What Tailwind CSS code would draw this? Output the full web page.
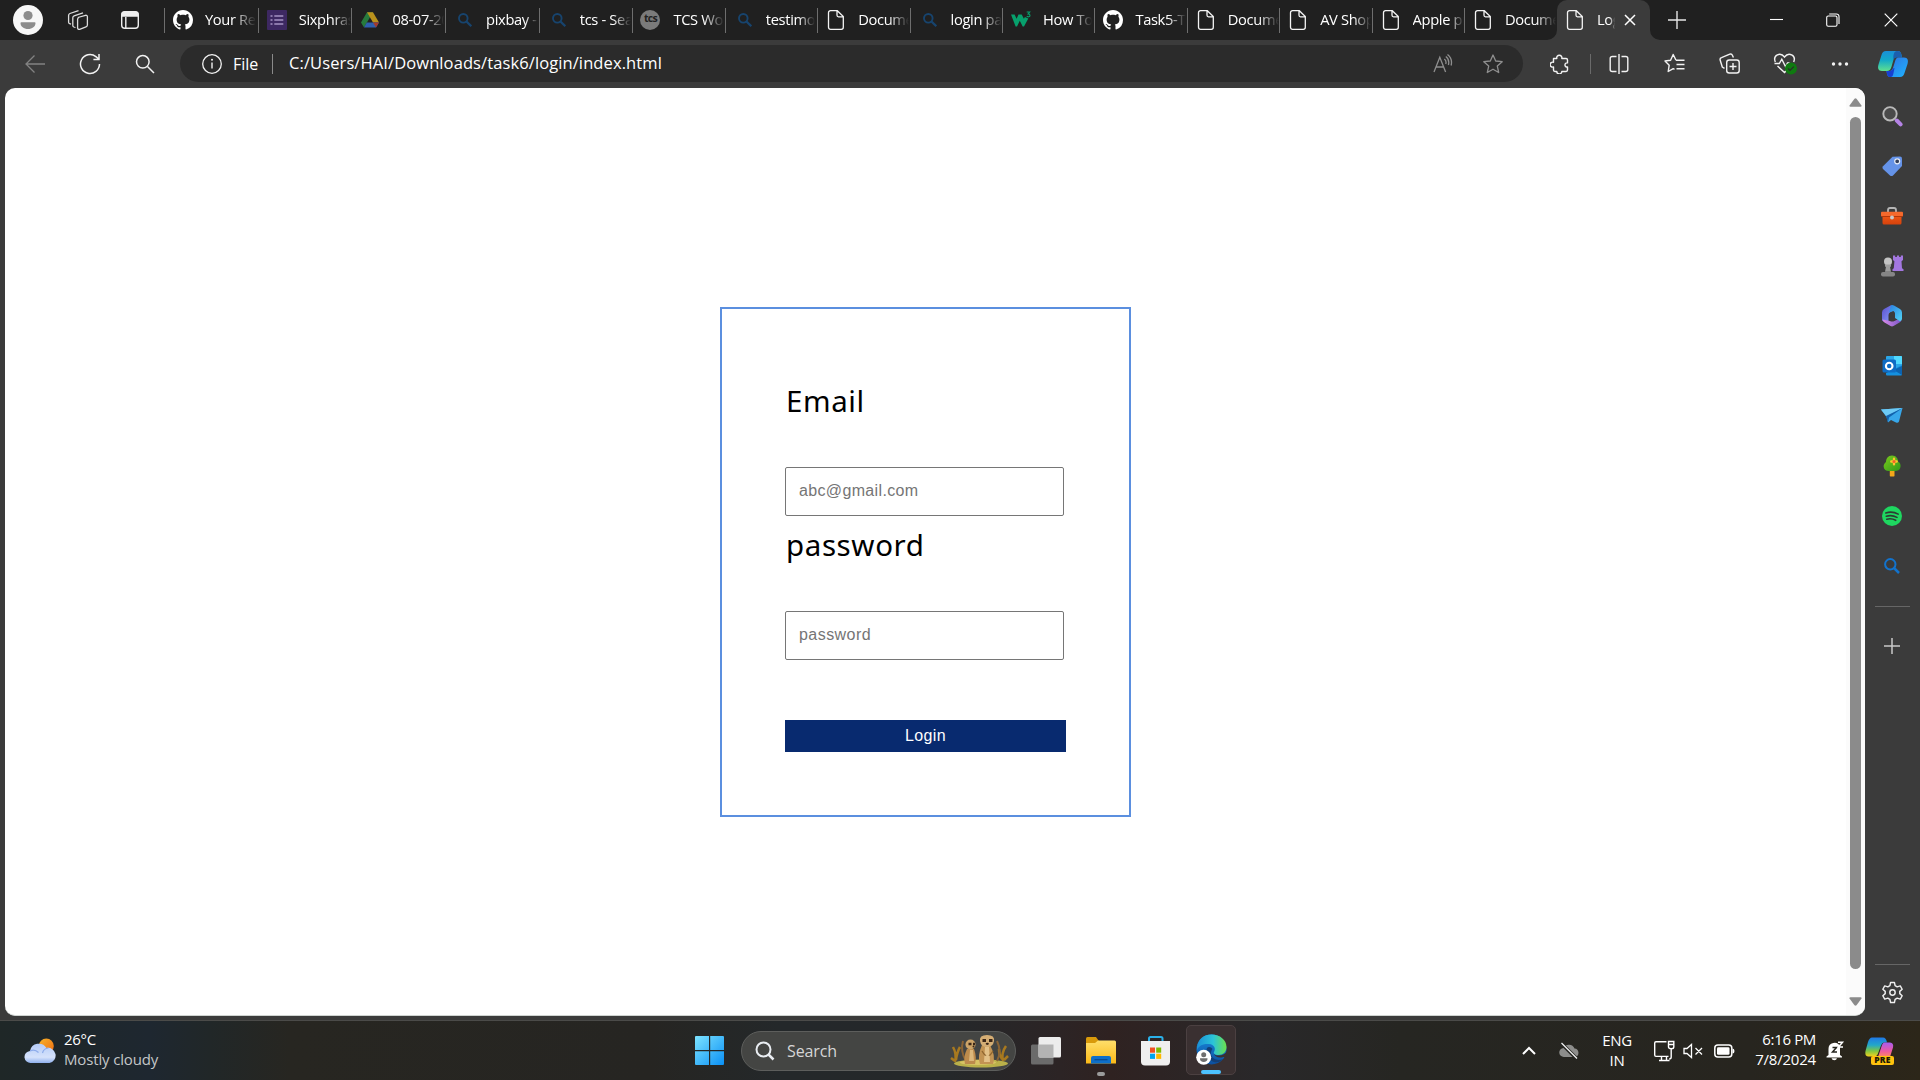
<!DOCTYPE html>
<html lang="en">
<head>
<meta charset="utf-8">
<title>Login</title>
<script src="https://cdn.jsdelivr.net/npm/@tailwindcss/browser@4"></script>
</head>
<body class="h-[1080px] w-[1920px] overflow-hidden bg-[#3b3b3b] font-['Open_Sans',sans-serif] text-white">
<svg class="absolute size-0">
  <defs>
    <linearGradient id="cpA" x1="0" y1="0" x2="0" y2="1"><stop offset="0" stop-color="#1a8fd8"/><stop offset=".45" stop-color="#12a9c9"/><stop offset="1" stop-color="#5fe08f"/></linearGradient>
    <linearGradient id="cpB" x1="0" y1="0" x2="1" y2="1"><stop offset="0" stop-color="#2f6fe0"/><stop offset="1" stop-color="#1fb4ff"/></linearGradient>
    <linearGradient id="m1" x1="0" y1="0" x2="1" y2="1"><stop offset="0" stop-color="#5a4fd0"/><stop offset="1" stop-color="#8fa8ff"/></linearGradient>
    <linearGradient id="m2" x1="0" y1="0" x2="1" y2="0"><stop offset="0" stop-color="#d98be8"/><stop offset="1" stop-color="#7a55c8"/></linearGradient>
    <linearGradient id="m3" x1="0" y1="0" x2="1" y2="1"><stop offset="0" stop-color="#2a7fe0"/><stop offset="1" stop-color="#52d5f5"/></linearGradient>
    <linearGradient id="win" x1="0" y1="0" x2="1" y2="1"><stop offset="0" stop-color="#7de3ff"/><stop offset="1" stop-color="#0a90f5"/></linearGradient>
    <linearGradient id="fold" x1="0" y1="0" x2="0" y2="1"><stop offset="0" stop-color="#ffdf6b"/><stop offset="1" stop-color="#fbb917"/></linearGradient>
    <linearGradient id="eg" x1="0" y1="0" x2="1" y2="0"><stop offset="0" stop-color="#1b8fd6"/><stop offset=".55" stop-color="#2bc4d8"/><stop offset="1" stop-color="#6be04c"/></linearGradient>
    <linearGradient id="eb" x1="0" y1="0" x2="0" y2="1"><stop offset="0" stop-color="#1a8be0"/><stop offset="1" stop-color="#0c4f9e"/></linearGradient>
    <linearGradient id="cl" x1="0" y1="0" x2="0" y2="1"><stop offset="0" stop-color="#b5ccf8"/><stop offset=".7" stop-color="#d5e2fb"/><stop offset="1" stop-color="#8fb0ee"/></linearGradient>
    <linearGradient id="sun" x1="0" y1="0" x2="1" y2="1"><stop offset="0" stop-color="#f6b32a"/><stop offset="1" stop-color="#ef6c12"/></linearGradient>
    <linearGradient id="pr1" x1="0" y1="0" x2="0" y2="1"><stop offset="0" stop-color="#1f78e6"/><stop offset=".4" stop-color="#22a7c9"/><stop offset=".7" stop-color="#7cc545"/><stop offset="1" stop-color="#f4d21c"/></linearGradient>
    <linearGradient id="pr2" x1="0" y1="0" x2="0" y2="1"><stop offset="0" stop-color="#a65cf0"/><stop offset=".6" stop-color="#ee5aa0"/><stop offset="1" stop-color="#ff8a5c"/></linearGradient>
    <linearGradient id="tool" x1="0" y1="0" x2="0" y2="1"><stop offset="0" stop-color="#f6601a"/><stop offset="1" stop-color="#d6420c"/></linearGradient>
    <linearGradient id="tree" x1="0" y1="0" x2="1" y2="1"><stop offset="0" stop-color="#7ccb1c"/><stop offset="1" stop-color="#2f9a18"/></linearGradient>
    <symbol id="doc" viewBox="0 0 20 20"><path d="M4.5.7h6.8l6 5.8v10.8a2 2 0 0 1-2 2H4.500a2 2 0 0 1-2-2V2.700a2 2 0 0 1 2-2z M11 .9v4.400a1.500 1.500 0 0 0 1.500 1.500h4.600" fill="none" stroke="#f4f4f4" stroke-width="1.300"/></symbol>
    <symbol id="gh" viewBox="0 0 16 16"><path fill="#fff" d="M8 0C3.580 0 0 3.580 0 8c0 3.540 2.290 6.530 5.470 7.590.4.070.55-.17.55-.38 0-.19-.01-.82-.01-1.490-2.010.37-2.530-.49-2.690-.94-.09-.23-.48-.94-.82-1.130-.28-.15-.68-.52-.01-.53.630-.010 1.080.58 1.230.82.720 1.210 1.870.87 2.330.66.070-.52.280-.87.510-1.070-1.780-.2-3.640-.89-3.640-3.950 0-.87.310-1.590.820-2.150-.080-.2-.360-1.020.080-2.120 0 0 .670-.21 2.200.82.640-.18 1.320-.27 2-.27s1.360.09 2 .27c1.530-1.040 2.200-.82 2.200-.82.440 1.100.160 1.920.080 2.120.510.56.820 1.270.820 2.150 0 3.070-1.870 3.750-3.650 3.950.290.25.540.73.540 1.480 0 1.070-.010 1.930-.010 2.200 0 .21.150.46.550.38A8.010 8.010 0 0 0 16 8c0-4.420-3.580-8-8-8z"/></symbol>
    <symbol id="bing" viewBox="0 0 20 20"><circle cx="9.300" cy="8.300" r="4.300" fill="none" stroke="#17446e" stroke-width="1.900"/><path d="M12.500 11.500l4.800 4.800" stroke="#17446e" stroke-width="2.300"/></symbol>
  </defs>
</svg>

<div class="flex h-[1080px] flex-col">
  <!-- Tab strip -->
  <div class="flex h-10 shrink-0 bg-[#202020] text-[14.7px] tracking-[-0.35px]">
    <div class="flex w-[164px] items-center">
      <svg class="ml-[13px] size-[30px]" viewBox="0 0 30 30"><circle cx="15" cy="15" r="15" fill="#f7f7f7"/><circle cx="15" cy="10.500" r="4.600" fill="#8c8c8c"/><path d="M8.300 17.200h13.400a.8.8 0 0 1 .8.8c0 3.600-3.300 6-7.500 6s-7.500-2.400-7.500-6a.8.8 0 0 1 .8-.8z" fill="#8c8c8c"/></svg>
      <svg class="ml-[23px] size-[24px]" viewBox="0 0 24 24" fill="none" stroke="#dcdcdc" stroke-width="1.300"><path d="M11.800 9.500l7.700-2.200a1.500 1.500 0 0 1 1.900 1.400v8.200a2 2 0 0 1-1.400 1.900l-6.400 2.500a1.500 1.500 0 0 1-2-1.400v-8.700a2 2 0 0 1 1.400-1.900"/><path d="M9.500 19.500l-1.700-.5a1.500 1.500 0 0 1-1-1.400V9.800a2 2 0 0 1 1.300-1.900L17 4.900"/><path d="M5 16.200l-1.400-.5a1.500 1.500 0 0 1-1-1.400V7.400a2 2 0 0 1 1.300-1.900L12.500 2.600"/></svg>
      <svg class="ml-[30px] size-[20px]" viewBox="0 0 20 20"><rect x="1.700" y="1.700" width="16.600" height="16.600" rx="3" fill="none" stroke="#eee" stroke-width="1.400"/><path d="M1.500 6.800V4.500a3 3 0 0 1 3-3h11a3 3 0 0 1 3 3v2.300z" fill="#eee"/><path d="M5.800 7v11" stroke="#eee" stroke-width="1.400"/></svg>
    </div>
    <div class="flex w-[1393px]" id="tabs">
      <div class="flex w-[93.7px] shrink-0 items-center"><i class="h-[25px] w-px bg-[#6e6e6e]"></i><svg class="ml-2 size-5 shrink-0"><use href="#gh"/></svg><span class="ml-3 w-[51px] overflow-hidden pb-0.5 whitespace-nowrap [mask-image:linear-gradient(90deg,#000_55%,transparent)]">Your Repo</span></div>
      <div class="flex w-[93.7px] shrink-0 items-center"><i class="h-[25px] w-px bg-[#6e6e6e]"></i><svg class="ml-2 size-5 shrink-0" viewBox="0 0 20 20"><rect width="20" height="20" rx="1" fill="#3d2862"/><path d="M7.300 6h9M7.300 10h9M7.300 14h9M3.500 6h2M3.500 10h2M3.500 14h2" stroke="#8b78ab" stroke-width="2"/></svg><span class="ml-3 w-[52px] overflow-hidden pb-0.5 whitespace-nowrap [mask-image:linear-gradient(90deg,#000_65%,transparent)]">Sixphrase</span></div>
      <div class="flex w-[93.7px] shrink-0 items-center"><i class="h-[25px] w-px bg-[#6e6e6e]"></i><svg class="ml-2 size-5 shrink-0" viewBox="0 0 20 20"><path d="M7 2.200h6L7.500 11.500 4 17.500 1 12.500z" fill="#277a3d"/><path d="M7 2.200h6l6 10.300h-6z" fill="#b9911c"/><path d="M6.800 12.500H19l-3 5H4z" fill="#2f5fae"/><path d="M13 12.500h6l-3 5z" fill="#a53a2c"/></svg><span class="ml-3 w-[52px] overflow-hidden pb-0.5 whitespace-nowrap [mask-image:linear-gradient(90deg,#000_65%,transparent)]">08-07-20</span></div>
      <div class="flex w-[93.7px] shrink-0 items-center"><i class="h-[25px] w-px bg-[#6e6e6e]"></i><svg class="ml-2 size-5 shrink-0"><use href="#bing"/></svg><span class="ml-3 w-[52px] overflow-hidden pb-0.5 whitespace-nowrap [mask-image:linear-gradient(90deg,#000_75%,transparent)]">pixbay - Se</span></div>
      <div class="flex w-[93.7px] shrink-0 items-center"><i class="h-[25px] w-px bg-[#6e6e6e]"></i><svg class="ml-2 size-5 shrink-0"><use href="#bing"/></svg><span class="ml-3 w-[51px] overflow-hidden pb-0.5 whitespace-nowrap [mask-image:linear-gradient(90deg,#000_65%,transparent)]">tcs - Sear</span></div>
      <div class="flex w-[92.4px] shrink-0 items-center"><i class="h-[25px] w-px bg-[#6e6e6e]"></i><span class="ml-[7px] flex size-5 shrink-0 items-center justify-center rounded-full bg-[#7b7b7b] pb-0.5 text-[10.500px] font-bold tracking-[-0.8px] text-[#222]">tcs</span><span class="ml-[13px] w-[51px] overflow-hidden pb-0.5 whitespace-nowrap [mask-image:linear-gradient(90deg,#000_60%,transparent)]">TCS World</span></div>
      <div class="flex w-[92.4px] shrink-0 items-center"><i class="h-[25px] w-px bg-[#6e6e6e]"></i><svg class="ml-2 size-5 shrink-0"><use href="#bing"/></svg><span class="ml-3 w-[49px] overflow-hidden pb-0.5 whitespace-nowrap [mask-image:linear-gradient(90deg,#000_65%,transparent)]">testimonial</span></div>
      <div class="flex w-[92.4px] shrink-0 items-center"><i class="h-[25px] w-px bg-[#6e6e6e]"></i><svg class="ml-2 size-5 shrink-0"><use href="#doc"/></svg><span class="ml-3 w-[51px] overflow-hidden pb-0.5 whitespace-nowrap [mask-image:linear-gradient(90deg,#000_60%,transparent)]">Document</span></div>
      <div class="flex w-[92.4px] shrink-0 items-center"><i class="h-[25px] w-px bg-[#6e6e6e]"></i><svg class="ml-2 size-5 shrink-0"><use href="#bing"/></svg><span class="ml-3 w-[51px] overflow-hidden pb-0.5 whitespace-nowrap [mask-image:linear-gradient(90deg,#000_60%,transparent)]">login page</span></div>
      <div class="flex w-[92.4px] shrink-0 items-center"><i class="h-[25px] w-px bg-[#6e6e6e]"></i><svg class="ml-2 size-5 shrink-0" viewBox="0 0 20 20"><path d="M0 4.500h3.600l2 4.300 1.900-4.300h3.200l2.200 4.300 1-1.800 3.400 1.500L13 16.500h-1.300L8.800 10.700 6 16.500H4.600z" fill="#07a06c"/><path d="M15.700 2h3l-1.600 1.900c1.300 0 1.900.7 1.900 1.500 0 1.500-2.200 1.900-3.300.8" fill="none" stroke="#07a06c" stroke-width="1.100"/></svg><span class="ml-3 w-[49px] overflow-hidden pb-0.5 whitespace-nowrap [mask-image:linear-gradient(90deg,#000_60%,transparent)]">How To M</span></div>
      <div class="flex w-[92.4px] shrink-0 items-center"><i class="h-[25px] w-px bg-[#6e6e6e]"></i><svg class="ml-2 size-5 shrink-0"><use href="#gh"/></svg><span class="ml-3 w-[51px] overflow-hidden pb-0.5 whitespace-nowrap [mask-image:linear-gradient(90deg,#000_65%,transparent)]">Task5-Test</span></div>
      <div class="flex w-[92.4px] shrink-0 items-center"><i class="h-[25px] w-px bg-[#6e6e6e]"></i><svg class="ml-2 size-5 shrink-0"><use href="#doc"/></svg><span class="ml-3 w-[51px] overflow-hidden pb-0.5 whitespace-nowrap [mask-image:linear-gradient(90deg,#000_60%,transparent)]">Document</span></div>
      <div class="flex w-[92.4px] shrink-0 items-center"><i class="h-[25px] w-px bg-[#6e6e6e]"></i><svg class="ml-2 size-5 shrink-0"><use href="#doc"/></svg><span class="ml-3 w-[51px] overflow-hidden pb-0.5 whitespace-nowrap [mask-image:linear-gradient(90deg,#000_65%,transparent)]">AV Shopp</span></div>
      <div class="flex w-[92.4px] shrink-0 items-center"><i class="h-[25px] w-px bg-[#6e6e6e]"></i><svg class="ml-2 size-5 shrink-0"><use href="#doc"/></svg><span class="ml-3 w-[51px] overflow-hidden pb-0.5 whitespace-nowrap [mask-image:linear-gradient(90deg,#000_70%,transparent)]">Apple pro</span></div>
      <div class="flex w-[92.4px] shrink-0 items-center"><i class="h-[25px] w-px bg-[#6e6e6e]"></i><svg class="ml-2 size-5 shrink-0"><use href="#doc"/></svg><span class="ml-3 w-[51px] overflow-hidden pb-0.5 whitespace-nowrap [mask-image:linear-gradient(90deg,#000_60%,transparent)]">Document</span></div>
    </div>
    <div class="relative flex w-[93px] shrink-0 items-center rounded-t-[10px] bg-[#3b3b3b]">
      <svg class="absolute bottom-0 -left-[10px] size-[10px]" viewBox="0 0 10 10"><path d="M10 0v10H0A10 10 0 0 0 10 0z" fill="#3b3b3b"/></svg>
      <svg class="absolute -right-[10px] bottom-0 size-[10px]" viewBox="0 0 10 10"><path d="M0 0v10h10A10 10 0 0 1 0 0z" fill="#3b3b3b"/></svg>
      <svg class="ml-2 size-5 shrink-0"><use href="#doc"/></svg><span class="ml-3 w-[18px] overflow-hidden pb-0.5 whitespace-nowrap [mask-image:linear-gradient(90deg,#000_70%,transparent)]">Login</span>
      <svg class="ml-[9px] size-3" viewBox="0 0 12 12"><path d="M1 1l10 10M11 1L1 11" stroke="#fff" stroke-width="1.500"/></svg>
    </div>
    <div class="flex grow items-center">
      <svg class="ml-[18px] size-[18px]" viewBox="0 0 18 18"><path d="M9 0v18M0 9h18" stroke="#e6e6e6" stroke-width="1.400"/></svg>
      <svg class="ml-[84px] h-[14px] w-[13px]" viewBox="0 0 13 14"><path d="M0 6.500h13" stroke="#fff" stroke-width="1.100"/></svg>
      <svg class="ml-[43px] size-[14px]" viewBox="0 0 14 14" fill="none" stroke="#fff" stroke-width="1.100"><rect x=".7" y="3" width="10.300" height="10.300" rx="1.500"/><path d="M3.200 1h7.300a2.500 2.500 0 0 1 2.500 2.500V11"/></svg>
      <svg class="ml-[44px] size-[14px]" viewBox="0 0 14 14"><path d="M.7.700l12.600 12.600M13.300.700L.7 13.300" stroke="#fff" stroke-width="1.200"/></svg>
    </div>
  </div>

  <!-- Toolbar -->
  <div class="flex h-12 shrink-0 items-start bg-[#3b3b3b] pt-[5px]">
    <div class="flex h-[37px] w-[180px] items-center">
      <svg class="ml-[24px] size-[22px]" viewBox="0 0 22 22"><path d="M10.500 2.500L2 11l8.500 8.500M2 11h19" fill="none" stroke="#828282" stroke-width="1.300"/></svg>
      <svg class="ml-[33px] size-[22px]" viewBox="0 0 22 22" fill="none" stroke="#f2f2f2" stroke-width="1.500"><path d="M20.500 11a9.500 9.500 0 1 1-3.600-7.400L20 6.300M20 1v5.500h-5.600"/></svg>
      <svg class="ml-[34px] size-[20px]" viewBox="0 0 20 20" fill="none" stroke="#f2f2f2" stroke-width="1.500"><circle cx="7.800" cy="7.800" r="6.300"/><path d="M12.500 12.500l6.500 6.500"/></svg>
    </div>
    <div class="flex h-[37px] w-[1343px] items-center rounded-full bg-[#2b2b2b] text-[16px]">
      <svg class="ml-[22px] size-5" viewBox="0 0 20 20"><circle cx="10" cy="10" r="9.300" fill="none" stroke="#f2f2f2" stroke-width="1.300"/><path d="M10 8.600v6" stroke="#f2f2f2" stroke-width="1.400"/><circle cx="10" cy="5.800" r="1" fill="#f2f2f2"/></svg>
      <span class="ml-[11px] w-[39px]">File</span>
      <i class="h-5 w-px bg-[#8a8a8a]"></i>
      <span class="ml-[16px] grow text-[16.5px] tracking-[0.1px] whitespace-nowrap">C:/Users/HAI/Downloads/task6/login/index.html</span>
      <svg class="h-5 w-[20px]" viewBox="0 0 20 20" fill="none" stroke="#8f8f8f" stroke-width="1.300"><path d="M1 18L6.800 3.200 12.600 18M3 13h7.600M11.300 5c1.700 1.300 2 3.300 1.400 5M12.800 2.500c3 2.200 3.500 5 2.600 8.500M14.500.500c3.900 3 4.600 7 3.600 11"/></svg>
      <svg class="mr-[20px] ml-[30px] size-[20px]" viewBox="0 0 20 20"><path d="M10 1l2.700 6 6.500.7-4.900 4.400 1.400 6.400L10 15.200l-5.700 3.300 1.400-6.400L.8 7.700 7.300 7z" fill="none" stroke="#8f8f8f" stroke-width="1.300" stroke-linejoin="round"/></svg>
    </div>
    <div class="flex h-[37px] grow items-center">
      <svg class="ml-[27px] size-[20px]" viewBox="0 0 20 20"><path d="M3.500 4.500h3.300a2.600 2.600 0 1 1 5 0h4.300a1.400 1.400 0 0 1 1.400 1.400v3a2.100 2.100 0 1 0 0 4.100v3.100a1.400 1.400 0 0 1-1.400 1.400h-4.300a2.500 2.500 0 0 1-5 0H4.900a1.400 1.400 0 0 1-1.400-1.400V13a2.500 2.500 0 1 1 0-4.700z" fill="none" stroke="#f2f2f2" stroke-width="1.400" stroke-linejoin="round"/></svg>
      <i class="ml-[20px] h-5 w-px bg-[#6a6a6a]"></i>
      <svg class="ml-[18px] size-[20px]" viewBox="0 0 20 20" fill="none" stroke="#f2f2f2" stroke-width="1.400"><path d="M7.500 2.500H3.200a2 2 0 0 0-2 2v11a2 2 0 0 0 2 2h4.300M12.500 2.500h4.300a2 2 0 0 1 2 2v11a2 2 0 0 1-2 2h-4.300M10 0v20"/></svg>
      <svg class="ml-[35px] size-[21px]" viewBox="0 0 21 21" fill="none" stroke="#f2f2f2" stroke-width="1.400" stroke-linejoin="round"><path d="M12 7.300L9.200 1.500 6.600 7.200 1 8l4.200 4.200-1 6.300 5-2.800 1.300.7M12 7.300h8.500M12.500 11.500h8M12.500 15.700h8"/></svg>
      <svg class="ml-[34px] size-[21px]" viewBox="0 0 21 21" fill="none" stroke="#f2f2f2" stroke-width="1.400"><rect x="7.700" y="7" width="12.500" height="13" rx="2.500"/><path d="M14 10v7M10.500 13.500h7M5.500 15.300L3.300 14 1.200 7.200a2 2 0 0 1 1.300-2.500L10.800 1.200a2 2 0 0 1 2.600 1l1 2.300"/></svg>
      <svg class="ml-[33px] h-[24px] w-[25px]" viewBox="0 0 25 24"><path d="M2.300 10C-.5 3 7.500-.5 11.500 5c4-5.500 12-2 9.200 5M4.500 14l7 6.500L14 18M1.500 11.500h4.800l2.500-4.300 3.700 7.300 2-3.500h2" fill="none" stroke="#f2f2f2" stroke-width="1.400"/><circle cx="18" cy="16.500" r="6" fill="#0f7a10"/><path d="M15 16.500l2 2 3.800-3.800" fill="none" stroke="#2b2b2b" stroke-width="1.200"/></svg>
      <svg class="ml-[33px] h-[6px] w-[18px]" viewBox="0 0 18 6" fill="#f2f2f2"><circle cx="2.500" cy="3" r="1.700"/><circle cx="9" cy="3" r="1.700"/><circle cx="15.500" cy="3" r="1.700"/></svg>
      <svg class="ml-[28px] h-[28px] w-[32px]" viewBox="0 0 32 28"><path d="M9 1h12c2 0 3 1.500 3.500 4l.5 2h-5c-2 0-3 1-3.600 3l-2 7c-.8 2.500-2 4-4.500 4H5c-4 0-4.500-3-3.500-6.500L4.500 5C5.300 2.500 6.500 1 9 1z" fill="url(#cpA)"/><path d="M20 1c3 0 4 1.500 4.500 4l.5 2.500h-5c-2 0-3 .7-3.500 2.500C16 5 17 1 20 1z" fill="#1c5fae"/><path d="M23 27H13.500c-2.500 0-3.500-1.500-4-6h3c2 0 3-1.500 3.500-3l2.300-7.500c.8-2.500 2-3 3.700-3H27c4 0 4.500 3 3.500 6.500L27.500 23c-.8 2.500-2 4-4.500 4z" fill="url(#cpB)"/><path d="M9.500 21c.5 4.500 1.500 6 4 6 2 0 2.500-1.500 3-4l1-5-1.500.5c-.8 1.500-1.500 2.500-3.500 2.500z" fill="#1740d0"/></svg>
    </div>
  </div>

  <!-- Page and sidebar -->
  <div class="flex h-[932px] shrink-0">
    <div class="ml-[5px] flex h-[928px] w-[1860px] shrink-0 overflow-hidden rounded-[10px] border-b border-[#cfd4d1] bg-white">
      <main class="flex w-[1841px] justify-center pt-[219px]">
        <form class="h-[510px] w-[411px] border-2 border-[#5b8fdf] pl-[63px] font-['Noto_Sans',sans-serif]">
          <label class="mt-[71px] block h-[41px] pl-px text-[29.500px] leading-[41px] tracking-[0.6px] text-black">Email</label>
          <input type="text" placeholder="abc@gmail.com" class="mt-[46px] block h-[49px] w-[279px] rounded-[2px] border border-[#767676] px-[13px] pb-0.5 font-['Liberation_Sans',Arial,sans-serif] text-[16px] tracking-[0.35px] placeholder-[#757575]">
          <label class="mt-[8px] block h-[41px] pl-px text-[29.500px] leading-[41px] tracking-[0.6px] text-black">password</label>
          <input type="text" placeholder="password" class="mt-[46px] block h-[49px] w-[279px] rounded-[2px] border border-[#767676] px-[13px] pb-0.5 font-['Liberation_Sans',Arial,sans-serif] text-[16px] tracking-[0.45px] placeholder-[#757575]">
          <button type="button" class="mt-[60px] block h-8 w-[281px] bg-[#082a6f] pb-px font-['Liberation_Sans',Arial,sans-serif] text-[16px] tracking-[0.35px] text-white">Login</button>
        </form>
      </main>
      <div class="flex w-[19px] flex-col items-center bg-[#fbfbfb]">
        <svg class="mt-[10px] h-[9px] w-[13px]" viewBox="0 0 13 9"><path d="M5.500.7q1-.9 2 0L12.500 7.500q.4 1.300-1 1.300h-10q-1.400 0-1-1.300z" fill="#8b8b8b"/></svg>
        <div class="mt-[10px] h-[852px] w-[11px] rounded-full bg-[#8b8b8b]"></div>
        <svg class="mt-[28px] h-[9px] w-[13px]" viewBox="0 0 13 9"><path d="M5.500 8.300q1 .9 2 0l5-6.800q.4-1.300-1-1.300h-10q-1.400 0-1 1.300z" fill="#8b8b8b"/></svg>
      </div>
    </div>
    <aside class="flex w-[55px] flex-col items-center pt-[3px] pr-px">
      <div class="flex h-[50px] items-center"><svg class="size-[22px]" viewBox="0 0 22 22"><circle cx="9" cy="8.800" r="6.700" fill="#4a4a4a" stroke="#b9b9b9" stroke-width="1.900"/><path d="M15.800 15.500l3.800 3.800" stroke="#b583e6" stroke-width="4" stroke-linecap="round"/></svg></div>
      <div class="flex h-[50px] items-center"><svg class="size-[22px]" viewBox="0 0 22 22"><path d="M11.500 1.800l7.500-.3q2 0 2 2v7.500L12 20.500q-1.500 1-3 0L2 14q-1.300-1.300 0-2.800z" fill="#6593e8"/><circle cx="16.200" cy="6.300" r="2.500" fill="#33405c" stroke="#e9eef8" stroke-width="1.200"/></svg></div>
      <div class="flex h-[50px] items-center"><svg class="h-[20px] w-[24px]" viewBox="0 0 24 20"><path d="M8 6V4q0-2 2-2h4q2 0 2 2v2" fill="none" stroke="#b5b5b5" stroke-width="1.800"/><rect x="2.500" y="6" width="19" height="12.500" rx="1.500" fill="url(#tool)"/><rect x="1" y="5.800" width="22" height="4.700" rx="1" fill="#f5692c"/><path d="M1.500 10.500h21" stroke="#b3370a"/><circle cx="12" cy="11.500" r="2" fill="#c9c9c9"/></svg></div>
      <div class="flex h-[50px] items-center"><svg class="h-[24px] w-[24px]" viewBox="0 0 24 24"><path d="M13 1.500h2.200v1.600h1.700V1.500h2.200v1.600h1.700V1.500H23V6l-1.500 1.300.5 7 1.500 1V17h-11v-1.700l1.300-1 .6-7L13 6z" fill="#a377e0"/><circle cx="8" cy="7.500" r="4" fill="#c4c4c4"/><path d="M5 10.500h6v2.300h-1l1 5h-6l1-5H5z" fill="#9d9d9d"/><rect x="1" y="18" width="14" height="4.500" rx="2" fill="#858585"/></svg></div>
      <div class="flex h-[50px] items-center"><svg class="h-[24px] w-[24px]" viewBox="0 0 24 24"><path d="M11 1.300L4 5Q2 6.200 2 8.500v8L8.500 20v-9q0-2 2-3L15 5.500z" fill="url(#m1)"/><path d="M2.500 15.500q.3 2 2 3l6 3.500q1.500.8 3 0l6-3.500q2-1.200 2-3v-2l-7 3.500q-2.500 1.200-4.500 0z" fill="url(#m2)"/><path d="M11 1.300q1.500-.6 3 .2L20 5q2 1.200 2 3.500v6q0 2-2 2.800L15 14V9.500q0-1.500-1.500-2.500L9 8.500z" fill="url(#m3)"/></svg></div>
      <div class="flex h-[50px] items-center"><svg class="h-[22px] w-[24px]" viewBox="0 0 24 22"><rect x="6" y="1" width="16" height="16" rx="1" fill="#2ba7e8"/><path d="M14 1h7q1 0 1 1v7h-8z" fill="#50d9ff"/><path d="M6 18l16-8v9.500q0 1-1 1H7q-1 0-1-1z" fill="#1490df"/><path d="M22 11v9L13.500 15z" fill="#0c63b0"/><rect x="2.500" y="4.500" width="13.500" height="13" rx="1.500" fill="#0f6cc4"/><circle cx="9.200" cy="11" r="3.300" fill="none" stroke="#fff" stroke-width="2.100"/></svg></div>
      <div class="flex h-[50px] items-center"><svg class="h-[20px] w-[24px]" viewBox="0 0 24 20"><path d="M1 3.500L22.500 2 19 15.500q-1 2-3 1L11 14l-3 2.500-1.500-5.500z" fill="#37a7ea"/><path d="M22.500 2L6.500 10.500 1 3.500z" fill="#6dcaf5"/><path d="M22.500 2L9 11.500 8 16.500 6 10z" fill="#1262ad"/></svg></div>
      <div class="flex h-[50px] items-center"><svg class="h-[24px] w-[22px]" viewBox="0 0 22 24"><rect x="8.800" y="16" width="4.700" height="6.500" rx=".7" fill="#f2a71b"/><path d="M11 1.500c4 0 6 3 6 6 2 1 3 3 2.500 5.500-.6 3-3 4-5.500 4H8c-3 0-5-1.500-5.300-4C2.400 11 3.500 9 5 8c0-3.500 2-6.500 6-6.500z" fill="url(#tree)"/><path d="M13 4.800v5.400M10.300 7.500h5.400" stroke="#ffc52e" stroke-width="2.400" stroke-linecap="round"/><circle cx="13" cy="7.500" r="1.500" fill="#f0602a"/></svg></div>
      <div class="flex h-[50px] items-center"><svg class="size-[20px]" viewBox="0 0 20 20"><circle cx="10" cy="10" r="10" fill="#1ed760"/><path d="M3.800 6.900c4-1.200 8.800-.8 12.400 1.200M4.300 10.200c3.500-1 7.500-.6 10.700 1.200M4.800 13.200c3-.8 6.200-.4 8.900 1.100" fill="none" stroke="#2e3b33" stroke-width="1.600" stroke-linecap="round"/></svg></div>
      <div class="flex h-[50px] items-center"><svg class="size-[18px]" viewBox="0 0 18 18" fill="none" stroke="#1273cd"><circle cx="7.300" cy="7.300" r="5.200" stroke-width="2"/><path d="M11 11l5 5" stroke-width="2.500"/></svg></div>
      <i class="mt-[15px] h-px w-[35px] shrink-0 bg-[#666]"></i>
      <svg class="mt-[31px] size-[16px] shrink-0" viewBox="0 0 16 16"><path d="M8 0v16M0 8h16" stroke="#c9c9c9" stroke-width="1.500"/></svg>
      <i class="mt-[310px] h-px w-[35px] shrink-0 bg-[#666]"></i>
      <svg class="mt-[16px] size-[23px] shrink-0" viewBox="0 0 24 24" fill="none" stroke="#efefef" stroke-width="1.500" stroke-linejoin="round"><path d="M10 1.500h4l.7 3.300 2.200 1.300 3.200-1 2 3.500-2.500 2.200v2.400l2.500 2.200-2 3.500-3.200-1-2.200 1.300-.7 3.300h-4l-.7-3.300-2.200-1.300-3.200 1-2-3.500 2.500-2.200v-2.400L1.900 8.600l2-3.500 3.200 1 2.200-1.300z"/><circle cx="12" cy="12" r="2.800"/></svg>
    </aside>
  </div>

  <!-- Taskbar -->
  <footer class="flex h-[60px] shrink-0 items-center border-t border-[#4b4b49] bg-[linear-gradient(90deg,#1f2727_0,#1e2730_150px,#212728_210px,#272621_290px,#262522_650px,#24282a_780px,#25282a_950px,#2c2425_1060px,#2f2221_1110px,#29282a_1260px,#262622_1400px,#27251f_1750px,#2c2619_1920px)]">
    <div class="flex w-[695px] items-center">
      <svg class="ml-[24px] h-[27px] w-[32px]" viewBox="0 0 32 27"><circle cx="22.300" cy="9" r="7.500" fill="url(#sun)"/><path d="M7 26a6 6 0 0 1-1-12 9 9 0 0 1 16.500-3 7.500 7.500 0 0 1 3 15z" fill="url(#cl)"/><path d="M6 14c3-1.500 6-1 8.500 1.500M18.500 16q1-4.500 6-5" fill="none" stroke="#8cabea" stroke-width="1.200"/></svg>
      <div class="ml-[8px] flex flex-col pb-1 text-[15px] leading-5 tracking-[-0.3px]"><span>26°C</span><span class="tracking-[-0.15px] text-[#c4c6c8]">Mostly cloudy</span></div>
    </div>
    <svg class="h-[30px] w-[30px]" viewBox="0 0 30 30"><path d="M0 1q0-1 1-1h13v14H0zM15.200 0H28q1 0 1 1v13H15.200zM0 15.200h14V29H1q-1 0-1-1zM15.200 15.200H29V28q0 1-1 1H15.200z" fill="url(#win)"/></svg>
    <div class="ml-4 flex h-10 w-[275px] items-center rounded-full border border-[#5d5e5c] bg-[#444543]">
      <svg class="ml-[13px] size-[20px]" viewBox="0 0 20 20" fill="none" stroke="#e9edf2" stroke-width="2"><circle cx="8.500" cy="8.500" r="7"/><path d="M13.500 13.500l5 5" stroke-width="2.500"/></svg>
      <span class="ml-[12px] grow text-[16px] tracking-[-0.1px] text-[#d6d6d6]">Search</span>
      <svg class="mr-[5px] h-[34px] w-[62px]" viewBox="0 0 62 34">
        <ellipse cx="33" cy="29.500" rx="27" ry="4" fill="#b9b04a"/><ellipse cx="30" cy="28.500" rx="18" ry="2.500" fill="#d8c365"/>
        <path d="M7 28Q9 20 5 13M3 24l4 3M12 13q-3 5-4 13M55 27q-2-8 3-15M60 22l-4 4M51 15q0 6 3 10" fill="none" stroke="#a8791f" stroke-width="2.500"/>
        <path d="M18 27q-6-10-3-20M49 27q5-10 0-20" fill="none" stroke="#8a6335" stroke-width="2"/>
        <path d="M17 30q-2-7 2-15l7 0q3 8 1 15z" fill="#bd8b4c"/><path d="M21 27l1-11h3l1 11z" fill="#dcb77b"/><circle cx="22.500" cy="10.500" r="5" fill="#cda468"/><path d="M20.500 10h3M25 10h2" stroke="#3b2617" stroke-width="2.400"/><circle cx="25.500" cy="12.500" r="1" fill="#3b2617"/>
        <path d="M32 30q-3-8 2-19h8q6 11 3 19z" fill="#c29353"/><path d="M36 28l1-15h4l1 15z" fill="#e3c188"/><path d="M32 7q-1-6 7-6t7 6q-1 6-7 6t-7-6z" fill="#d4ad74"/><path d="M34.500 6.500h3.500M41 6.500h3.500" stroke="#3b2617" stroke-width="3"/><ellipse cx="39.300" cy="9.800" rx="1.600" ry="1.100" fill="#3b2617"/><path d="M34 17q3 5 4 4M45 17q-3 5-4 4" fill="none" stroke="#8f652f" stroke-width="1.300"/>
      </svg>
    </div>
    <svg class="ml-[15px] size-[30px]" viewBox="0 0 30 30"><rect x="0" y="8.500" width="22.500" height="20" rx="1.500" fill="#6b6b6b"/><rect x="7.500" y="1" width="22.500" height="20.500" rx="1.500" fill="#ececec"/><path d="M7.500 8.500h15v13H9q-1.500 0-1.500-1.500z" fill="#b3b3b3"/></svg>
    <div class="relative ml-[25px] h-[50px] w-[30px]">
      <svg class="mt-[10px] h-[30px] w-[30px]" viewBox="0 0 30 30"><path d="M0 2.500Q0 1 1.500 1H10l2.500 3.500V9H0z" fill="#d99a0b"/><path d="M0 7h9l3-2.500h16.500Q30 4.500 30 6v21.500H0z" fill="url(#fold)"/><path d="M5 27.500V22q0-2 2-2h16q2 0 2 2v5.500z" fill="#0e6fc9"/><path d="M8.500 23.700h13" stroke="#0a4a92" stroke-width="1.300"/></svg>
      <i class="absolute bottom-0 left-[11px] h-1 w-2 rounded-full bg-[#9b9b9b]"></i>
    </div>
    <svg class="ml-[25px] h-[30px] w-[30px]" viewBox="0 0 30 30"><path d="M8 7V2.500q0-1.500 1.500-1.500h10.500Q21.500 1 21.500 2.500V7" fill="none" stroke="#2ab0e8" stroke-width="2"/><path d="M0 5h29v20.500q0 4-4 4H4q-4 0-4-4z" fill="#efefef"/><path d="M9 11.500h5v5.200H9z" fill="#f25022"/><path d="M15.200 11.500h5v5.200h-5z" fill="#7fba00"/><path d="M9 17.700h5v5.200H9z" fill="#00a4ef"/><path d="M15.200 17.700h5v5.200h-5z" fill="#ffb900"/></svg>
    <div class="relative -top-px ml-[15px] flex h-[50px] w-[50px] items-center justify-center rounded-[5px] border border-[#4b4041] bg-[#3a3031]">
      <svg class="size-[31px]" viewBox="0 0 31 31"><circle cx="15.500" cy="15.500" r="15" fill="url(#eb)"/><path d="M1 13C2 5 8 .5 15.500.500 24 .500 30.500 6 30.500 13c0 5-3.500 8-8 8-3.500 0-5.500-1.500-4.500-3 2-3 .5-7.500-5-8C8 9.600 3 11 1 16z" fill="url(#eg)"/><path d="M11 14c-2 5 0 12 7 14 4 1 7-.5 9-3-4 2-11 1-12-5-.3-2 .5-4 1.500-5-1-2-4-3-5.500-1z" fill="#123f78"/><path d="M31 17c-2 3.500-5 4.500-8.500 4.500-2 0-3.500-.5-4.500-1.500 1 3 5 4.500 9.500 3l3 .5z" fill="#3a3031"/><circle cx="7.700" cy="23.300" r="7.500" fill="#fff"/><circle cx="7.700" cy="20.700" r="2.500" fill="#6e6e6e"/><path d="M4 24.200h7.500c.3 2.500-1.700 3.800-3.800 3.800S3.700 26.700 4 24.200z" fill="#6e6e6e"/></svg>
      <i class="absolute bottom-0 left-[14px] h-1 w-[20px] rounded-full bg-[#4cc2ff]"></i>
    </div>
    <div class="flex grow items-center text-[15px] leading-5 tracking-[-0.35px]">
      <svg class="ml-[286px] h-[10px] w-[14px]" viewBox="0 0 14 10"><path d="M1 8l6-6 6 6" fill="none" stroke="#fff" stroke-width="2"/></svg>
      <svg class="ml-[22px] h-[18px] w-[22px]" viewBox="0 0 22 18"><path d="M6 15a4.500 4.500 0 0 1-.5-9 6 6 0 0 1 11 .5A4.300 4.300 0 0 1 17 15z" fill="#8d8d8b"/><path d="M3 1l16.500 16.500" stroke="#262622" stroke-width="3.500"/><path d="M3.500 1L19 16.500" stroke="#f4f4f4" stroke-width="1.300"/></svg>
      <div class="ml-[21px] flex w-[32px] flex-col pb-0.5 text-center"><span>ENG</span><span>IN</span></div>
      <svg class="ml-[20px] h-[22px] w-[22px]" viewBox="0 0 22 22" fill="none" stroke="#fff" stroke-width="1.400"><path d="M13.500 1.800H3q-1.300 0-1.300 1.300v12q0 1.300 1.300 1.300h12.500M6 20.500h10.500M8.500 16.500v4M13.500 16.500v4"/><path d="M15.500 1.500h5.300V7q0 1.800-2.600 1.800T15.500 7zM15.500 4.500h5.300M18.200 9v8q0 2-2 2"/></svg>
      <svg class="ml-[8px] h-[16px] w-[21px]" viewBox="0 0 21 16" fill="none" stroke="#fff" stroke-width="1.300"><path d="M1 5.500h3l4.500-4v13l-4.500-4H1zM12.500 5l6.500 6.500M19 5l-6.500 6.500"/></svg>
      <svg class="ml-[10px] h-[14px] w-[21px]" viewBox="0 0 21 14"><rect x=".8" y="1" width="17" height="12" rx="3" fill="none" stroke="#fff" stroke-width="1.500"/><rect x="3" y="3.200" width="12.500" height="7.600" rx="1.300" fill="#fff"/><path d="M18.500 4.500q2 0 2 2.500t-2 2.500z" fill="#fff"/></svg>
      <div class="ml-[17px] flex w-[64px] flex-col pb-[3px] text-right whitespace-nowrap"><span>6:16 PM</span><span class="tracking-[-0.2px]">7/8/2024</span></div>
      <svg class="ml-[10px] h-[20px] w-[20px]" viewBox="0 0 20 20"><path d="M2.500 14V8a6 6 0 0 1 11.500-2.500V14l2 1.500v1H.500v-1zM5.500 17.300h5.500q-.5 2-2.700 2t-2.800-2z" fill="#fff"/><path d="M6.500 6.500h4l-4 4.500h4.500" fill="none" stroke="#26251f" stroke-width="1.500"/><path d="M12 1.300h4.500L12.500 6h4.500" fill="none" stroke="#fff" stroke-width="1.500"/></svg>
      <div class="relative ml-[18px] h-[30px] w-[30px]">
        <svg class="size-[30px]" viewBox="0 0 30 30"><path d="M8 1.500h11q3 0 4 5h-3q-2 0-3 3l-3 8q-1 3-4 3H4Q.500 20 1.500 15L4 6Q5.500 1.500 8 1.500z" fill="url(#pr1)"/><path d="M20 6.500h6q4 .5 3 5l-3 9.500H14l4-12q.6-2 2-2.500z" fill="url(#pr2)"/></svg>
        <span class="absolute top-[20px] left-[7px] flex h-[9px] w-[23px] items-center justify-center rounded-[2px] bg-[#ffc20e] text-[8.500px] font-extrabold tracking-[0.2px] text-[#201a05]">PRE</span>
      </div>
    </div>
  </footer>
</div>
</body>
</html>
